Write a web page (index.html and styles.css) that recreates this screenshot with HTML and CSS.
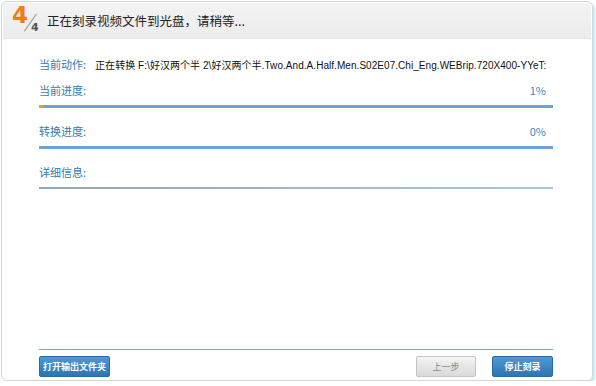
FILE: index.html
```html
<!DOCTYPE html>
<html lang="zh-CN">
<head>
  <meta charset="UTF-8">
  <title>刻录</title>
  <link rel="stylesheet" href="styles.css">
</head>
<body>
  <div class="window">
    <div class="header">
      <div class="step">
        <span class="step-now">4</span>
        <span class="step-slash"></span>
        <span class="step-total">4</span>
      </div>
      <div class="title">正在刻录视频文件到光盘，请稍等...</div>
    </div>

    <div class="content">
      <div class="row action">
        <span class="label">当前动作:</span>
        <span class="value">正在转换 F:\好汉两个半 2\好汉两个半.Two.And.A.Half.Men.S02E07.Chi_Eng.WEBrip.720X400-YYeT:</span>
      </div>

      <div class="row">
        <span class="label">当前进度:</span>
        <span class="pct">1%</span>
      </div>
      <div class="bar"><div class="fill" style="width: 5px"></div></div>

      <div class="row second">
        <span class="label">转换进度:</span>
        <span class="pct">0%</span>
      </div>
      <div class="bar"><div class="fill" style="width: 0"></div></div>

      <div class="row second">
        <span class="label">详细信息:</span>
      </div>
      <div class="detail-line"></div>
    </div>

    <div class="footer">
      <button class="btn blue">打开输出文件夹</button>
      <div class="right-btns">
        <button class="btn grey">上一步</button>
        <button class="btn blue wide">停止刻录</button>
      </div>
    </div>
  </div>
</body>
</html>
```

FILE: styles.css
```css
body {
  margin: 0;
  background: #ffffff;
  font-family: "Noto Sans CJK SC", "DejaVu Sans", sans-serif;
}
.window {
  margin: 1px 3px 0 1px;
  height: 380px;
  box-sizing: border-box;
  border: 1px solid #d3d6d8;
  border-radius: 6px;
  box-shadow: 2px 2px 2px rgba(140, 215, 228, 0.55);
  display: flex;
  flex-direction: column;
  overflow: hidden;
}
.header {
  height: 35px;
  margin: 1px 1px 0 1px;
  background: linear-gradient(#f3f3f3, #ececec);
  border-bottom: 1px solid #e6e6e6;
  border-radius: 4px 4px 0 0;
  display: flex;
  align-items: center;
}
.step {
  position: relative;
  width: 30px;
  height: 30px;
  margin-left: 8px;
}
.step-now {
  position: absolute;
  left: 1px;
  top: -4px;
  font-family: "DejaVu Sans", sans-serif;
  font-weight: bold;
  font-size: 23px;
  color: #ef7d16;
}
.step-slash {
  position: absolute;
  left: 19px;
  top: 6px;
  width: 1px;
  height: 21px;
  background: #9a9a9a;
  transform: rotate(35deg);
}
.step-total {
  position: absolute;
  left: 20px;
  top: 15px;
  font-family: "DejaVu Sans", sans-serif;
  font-weight: bold;
  font-size: 11px;
  color: #555555;
}
.title {
  margin-left: 6px;
  font-size: 12.5px;
  color: #222222;
}
.content {
  flex: 1;
  padding: 0 39px 0 37px;
}
.row {
  display: flex;
  justify-content: space-between;
  align-items: center;
  height: 16px;
  font-size: 11px;
  margin-top: 10px;
}
.row.action {
  justify-content: flex-start;
  margin-top: 17px;
}
.row.second {
  margin-top: 15px;
}
.label {
  flex-shrink: 0;
  color: #2f7cb4;
  font-size: 11px;
}
.value {
  margin-left: 9px;
  color: #111111;
  font-family: "Liberation Sans", "Noto Sans CJK SC", sans-serif;
  font-size: 10px;
  letter-spacing: 0.05px;
  white-space: nowrap;
}
.pct {
  color: #3d87bd;
  font-size: 11px;
  margin-right: 7px;
}
.bar {
  height: 3px;
  margin-top: 7px;
  background: #6ca3d2;
}
.fill {
  height: 100%;
  background: #f39a1e;
}
.detail-line {
  height: 2px;
  margin-top: 7px;
  background: linear-gradient(90deg, #9aa6ad, #a8c8d6);
}
.footer {
  margin: 0 39px 3px 37px;
  padding-top: 6px;
  border-top: 1px solid #7e9fba;
  display: flex;
  justify-content: space-between;
  align-items: center;
}
.right-btns {
  display: flex;
  gap: 16px;
}
.btn {
  height: 21px;
  padding: 0 3px;
  border-radius: 2px;
  font-family: "Noto Sans CJK SC", sans-serif;
  font-size: 9px;
  font-weight: bold;
  cursor: pointer;
}
.btn.blue {
  min-width: 71px;
  color: #ffffff;
  background: linear-gradient(#4f9ad3, #2c74b3);
  border: 1px solid #2a6aa4;
}
.btn.wide {
  width: 61px;
  min-width: 0;
}
.btn.grey {
  width: 60px;
  color: #8a8a8a;
  font-weight: normal;
  background: linear-gradient(#f4f4f4, #d9d9d9);
  border: 1px solid #c4c4c4;
}
```
